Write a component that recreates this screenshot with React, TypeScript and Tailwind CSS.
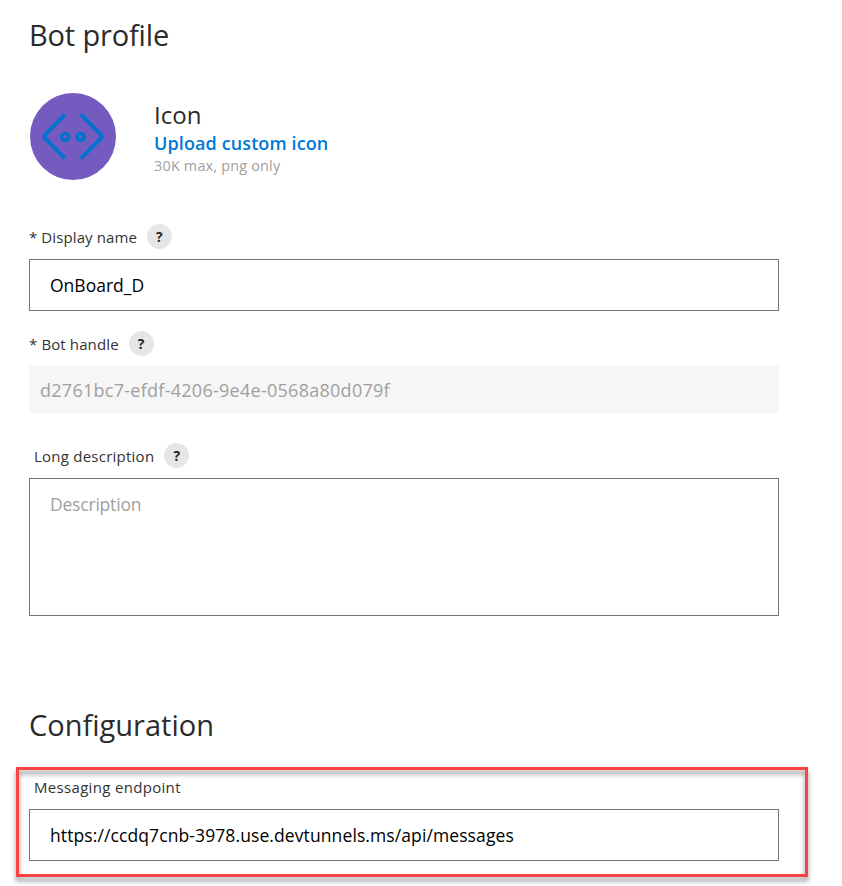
import type { ReactNode } from "react";

function HelpBadge() {
  return (
    <button
      aria-label="Help"
      className="flex h-[25px] w-[25px] shrink-0 items-center justify-center rounded-full bg-[#e6e6e6] pt-px text-[14px] leading-none font-bold text-[#252525]"
    >
      ?
    </button>
  );
}

function Heading({ children, className = "" }: { children: ReactNode; className?: string }) {
  return <h2 className={`text-[29px] leading-10 text-[#2b2b2b] ${className}`}>{children}</h2>;
}

function BotIcon() {
  return (
    <svg width="88" height="88" viewBox="0 0 88 88" fill="none" className="shrink-0">
      <ellipse cx="44" cy="43.5" rx="43" ry="43.5" fill="#755bc0" />
      <g stroke="#0173cf" strokeLinejoin="round">
        <path d="M36 21.5 16.4 41.3Q14.4 43.5 16.4 45.7L36 65.3" strokeWidth="4" />
        <path d="M52 21.5 71.6 41.3Q73.6 43.5 71.6 45.7L52 65.3" strokeWidth="4" />
        <circle cx="36.2" cy="44" r="3.5" strokeWidth="3.6" />
        <circle cx="51.4" cy="44" r="3.5" strokeWidth="3.6" />
      </g>
    </svg>
  );
}

export default function App() {
  return (
    <main className="h-[886px] w-[842px] overflow-hidden bg-white pt-[15px] pl-[29px] font-['Open_Sans',sans-serif] text-[#333]">
      <section className="w-[750px]">
        <Heading className="tracking-[-0.16px]">Bot profile</Heading>

        <div className="mt-[38px] flex">
          <BotIcon />
          <div className="ml-[37px] flex flex-col pt-2">
            <span className="text-[24px] leading-7 text-[#2b2b2b]">Icon</span>
            <a className="text-[18px] leading-7 font-semibold tracking-[0.11px] text-[#0078d4]">Upload custom icon</a>
            <span className="-mt-px text-[14.5px] leading-5 tracking-[0.15px] text-[#a0a0a0]">30K max, png only</span>
          </div>
        </div>

        <div className="mt-[43px] flex items-center gap-2.5">
          <label className="pt-0.5 text-[15px] leading-[23px] tracking-[0.1px]">* Display name</label>
          <HelpBadge />
        </div>
        <div className="mt-2.5 flex h-[52px] items-center border border-[#767676] px-5 text-[17.5px] text-black">
          OnBoard_D
        </div>

        <div className="mt-5 flex items-center gap-2.5">
          <label className="pt-0.5 text-[15px] leading-[23px] tracking-[0.12px]">* Bot handle</label>
          <HelpBadge />
        </div>
        <div className="mt-2.5 flex h-[47px] items-center bg-[#f6f6f6] px-[11px] pt-px text-[18px] tracking-[0.27px] text-[#a0a0a0]">
          d2761bc7-efdf-4206-9e4e-0568a80d079f
        </div>

        <div className="mt-[30px] flex items-center gap-2.5 pl-[5px]">
          <label className="pt-0.5 text-[15px] leading-[23px] tracking-[0.24px]">Long description</label>
          <HelpBadge />
        </div>
        <div className="mt-2.5 h-[138px] border border-[#767676] px-5 pt-[13px] text-[17.5px] leading-6 tracking-[-0.2px] text-[#a0a0a0]">
          Description
        </div>
      </section>

      <section className="mt-[89px] w-[750px]">
        <Heading>Configuration</Heading>
        <div className="relative mt-[30px]">
          <label className="block pl-[5px] text-[15px] leading-[25px] tracking-[0.32px]">Messaging endpoint</label>
          <div className="mt-[9px] flex h-[52px] items-center border border-[#767676] px-5 text-[17.5px] tracking-[0.1px] text-black">
            https://ccdq7cnb-3978.use.devtunnels.ms/api/messages
          </div>
          <div className="pointer-events-none absolute -top-2 -left-[13px] h-[110px] w-[792px] border-[3px] border-[#fc4343] drop-shadow-[0_4px_2.5px_rgba(0,0,0,0.45)]" />
        </div>
      </section>
    </main>
  );
}
